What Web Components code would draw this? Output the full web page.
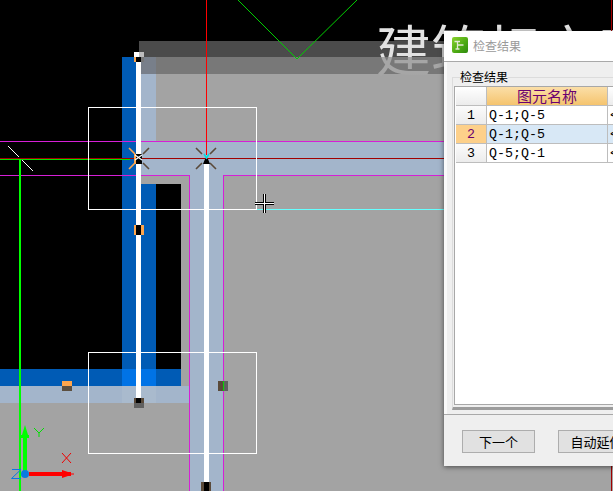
<!DOCTYPE html>
<html>
<head>
<meta charset="utf-8">
<style>
    html, body { margin: 0; height: 100%; overflow: hidden; background: #000; }
</style>
</head>
<body>
<cad-canvas></cad-canvas>
<check-dialog></check-dialog>

<script>
class CadCanvas extends HTMLElement {
    constructor() {
        super();
        this.attachShadow({ mode: "open" });
    }

    connectedCallback() {
        this.shadowRoot.innerHTML = `
            <style>
                :host { position: absolute; inset: 0; display: block; }
                svg { display: block; }
                .plan rect, .plan line.h { shape-rendering: crispEdges; }
                text { font-family: "Noto Sans CJK SC", sans-serif; font-size: 55px; letter-spacing: 0; }
            </style>
            <svg width="613" height="491" viewBox="0 0 613 491">
                <defs>
                    <linearGradient id="wm" gradientUnits="userSpaceOnUse" x1="0" y1="0" x2="0" y2="100">
                        <stop offset="0.57" stop-color="#e2e2e2"/>
                        <stop offset="0.57" stop-color="#a6a6a6"/>
                    </linearGradient>
                </defs>
                <g class="plan">
                    <rect x="139" y="41" width="474" height="16" fill="#4b4b4b"/>
                    <rect x="139" y="57" width="474" height="17" fill="#787878"/>
                    <rect x="139" y="74" width="474" height="417" fill="#a3a3a3"/>
                    <rect x="0" y="403" width="190" height="88" fill="#a3a3a3"/>

                    <rect x="122" y="57" width="17" height="127" fill="#005bb5"/>
                    <rect x="141" y="57" width="15" height="17" fill="#787f8a"/>
                    <rect x="141" y="74" width="15" height="101" fill="#a3b5cb"/>
                    <rect x="141" y="142" width="472" height="33" fill="#a3b5cb"/>
                    <rect x="190" y="175" width="33" height="316" fill="#a3b5cb"/>

                    <rect x="122" y="175" width="19" height="9" fill="#005bb5"/>
                    <rect x="122" y="184" width="34" height="185" fill="#005bb5"/>
                    <rect x="156" y="184" width="25" height="185" fill="#000"/>
                    <rect x="0" y="369" width="181" height="17" fill="#005bb5"/>
                    <rect x="122" y="369" width="34" height="17" fill="#0073e6"/>
                    <rect x="0" y="386" width="189" height="17" fill="#a3b5cb"/>
                    <rect x="122" y="386" width="34" height="17" fill="#a9bacd"/>
                </g>

                <text x="376" y="71" fill="url(#wm)">建筑标文库</text>

                <g class="plan" fill="none">
                    <rect x="611" y="0" width="1" height="491" fill="#a00000"/>
                    <rect x="0" y="141" width="613" height="1" fill="#d61fd6"/>
                    <rect x="0" y="175" width="189" height="1" fill="#d61fd6"/>
                    <rect x="223" y="175" width="390" height="1" fill="#d61fd6"/>
                    <rect x="189" y="175" width="1" height="316" fill="#d61fd6"/>
                    <rect x="223" y="175" width="1" height="316" fill="#d61fd6"/>
                    <rect x="206" y="0" width="1" height="155" fill="#ff0000"/>
                    <rect x="0" y="158" width="613" height="1" fill="#a00000"/>
                    <rect x="0" y="159" width="130" height="1" fill="#00e000"/>
                    <rect x="19" y="159" width="2" height="332" fill="#00ff00"/>
                    <rect x="136" y="62" width="5" height="336" fill="#fff"/>
                    <rect x="204" y="164" width="5" height="318" fill="#fff"/>
                    <rect x="256" y="209" width="357" height="1" fill="#66ffff"/>
                    <rect x="88" y="107" width="168" height="1" fill="#fff"/>
                    <rect x="88" y="209" width="169" height="1" fill="#fff"/>
                    <rect x="88" y="107" width="1" height="102" fill="#fff"/>
                    <rect x="256" y="107" width="1" height="102" fill="#fff"/>
                    <rect x="88" y="352" width="168" height="1" fill="#fff"/>
                    <rect x="88" y="453" width="169" height="1" fill="#fff"/>
                    <rect x="88" y="352" width="1" height="101" fill="#fff"/>
                    <rect x="256" y="352" width="1" height="102" fill="#fff"/>

                    <!-- grips -->
                    <rect x="134" y="52" width="5" height="5" fill="#fff"/>
                    <rect x="139" y="52" width="5" height="5" fill="#bdbdbd"/>
                    <rect x="134" y="57" width="2" height="5" fill="#ffa64d"/>
                    <rect x="136" y="57" width="5" height="5" fill="#000"/>
                    <rect x="141" y="57" width="3" height="5" fill="#777"/>

                    <rect x="134" y="225" width="10" height="10" fill="#ffa64d"/>
                    <rect x="136" y="225" width="5" height="10" fill="#000"/>

                    <rect x="134" y="398" width="10" height="5" fill="#5a4a3a"/>
                    <rect x="134" y="403" width="10" height="5" fill="#606060"/>
                    <rect x="136" y="398" width="5" height="5" fill="#000"/>

                    <rect x="201" y="482" width="10" height="9" fill="#5a4a3a"/>
                    <rect x="204" y="482" width="5" height="9" fill="#000"/>

                    <rect x="62" y="381" width="10" height="5" fill="#ffa64d"/>
                    <rect x="62" y="386" width="10" height="5" fill="#5c4f40"/>

                    <rect x="218" y="381" width="5" height="10" fill="#5a4a3a"/>
                    <rect x="223" y="381" width="5" height="10" fill="#606060"/>
                    <rect x="223" y="381" width="1" height="10" fill="#00e000"/>
                </g>

                <!-- top chevron and pick box -->
                <polyline points="238,0 297,59 357,0" fill="none" stroke="#00d000" stroke-width="1"/>
                <g stroke="#fff" stroke-width="1">
                    <line x1="8" y1="146" x2="19" y2="157"/>
                    <line x1="22" y1="160" x2="33" y2="171"/>
                </g>

                <!-- snap marks -->
                <g stroke-width="1.6" fill="none">
                    <path d="M129 148L135 154M129 169L135 163" stroke="#ffa64d"/>
                    <path d="M149 148L143 154M149 169L143 163" stroke="#5a4a3a"/>
                    <path d="M196 148L202 154M196 169L202 163M216 148L210 154M216 169L210 163" stroke="#5a4a3a"/>
                </g>
                <rect x="134" y="154" width="2" height="10" fill="#ffa64d"/>
                <rect x="136" y="154" width="6" height="10" fill="#000"/>
                <path d="M135 155L142 160M142 155L135 160" stroke="#fff" stroke-width="1.2"/>
                <path d="M203 164L205 159H208L210 164Z" fill="#000"/>
                <path d="M204 154L206.500 158L209 154" fill="none" stroke="#00e0e0" stroke-width="1.500"/>

                <!-- crosshair -->
                <g shape-rendering="crispEdges">
                    <rect x="255" y="202" width="19" height="3" fill="#000"/>
                    <rect x="263" y="194" width="3" height="19" fill="#000"/>
                    <rect x="255" y="203" width="19" height="1" fill="#fff"/>
                    <rect x="264" y="194" width="1" height="19" fill="#fff"/>
                </g>

                <!-- ucs icon -->
                <path d="M25 425L28 435H29V438H27V474H23V438H20V435H22Z" fill="#00ff00"/>
                <path d="M34 428L39 433L44 428M39 433V437" fill="none" stroke="#00e000" stroke-width="1"/>
                <path d="M29 472H62V470L68 472H71V473.5H74V474.5H71V476H68L62 478V476H29Z" fill="#ff0000"/>
                <path d="M62 453L71 463M71 453L62 463" fill="none" stroke="#f00000" stroke-width="1"/>
                <path d="M12 469.500H21L11.500 478.500H21" fill="none" stroke="#0a7ae0" stroke-width="1"/>
                <circle cx="25" cy="474" r="4" fill="#0a7ae0"/>
            </svg>
        `;
    }
}

class ResultTable extends HTMLElement {
    constructor() {
        super();
        this.attachShadow({ mode: "open" });
    }

    set data(rows) {
        this._rows = rows;
        this.render();
    }

    render() {
        const body = this._rows.map((r, i) => `
            <div class="num ${r.active ? "active" : ""}">${i + 1}</div>
            <div class="cell ${r.active ? "active" : ""}">${r.name}</div>
            <div class="cell ${r.active ? "active" : ""}">${r.more}</div>
        `).join("");
        this.shadowRoot.innerHTML = `
            <style>
                :host {
                    display: block;
                    box-sizing: border-box;
                    height: 319px;
                    background: #fff;
                    border: 1px solid #a8a8a8;
                    border-width: 1px 0 1px 1px;
                    padding-left: 1px;
                }
                .grid {
                    display: grid;
                    grid-template-columns: 31px 121px 60px;
                    grid-auto-rows: 19px;
                }
                .grid > div {
                    box-sizing: border-box;
                    border-right: 1px solid #bdbdbd;
                    border-bottom: 1px solid #bdbdbd;
                    white-space: nowrap;
                    overflow: hidden;
                }
                .corner { background: linear-gradient(#fff, #ececec); }
                .head {
                    background: linear-gradient(#fbdfa8, #f5c46e);
                    color: #6a0070;
                    font: 15px/18px "Noto Sans CJK SC", sans-serif;
                    text-align: center;
                }
                .num {
                    background: linear-gradient(#fbfbfb, #ececec);
                    font: 13.300px/19px "Liberation Mono", monospace;
                    text-align: center;
                    color: #000;
                }
                .num.active { background: #fdd08a; color: #6a0070; }
                .cell {
                    font: 13.300px/19px "Liberation Mono", monospace;
                    padding-left: 2px;
                    color: #000;
                }
                .cell.active { background: #d8e8f6; }
            </style>
            <div class="grid">
                <div class="corner"></div>
                <div class="head">图元名称</div>
                <div class="corner"></div>
                ${body}
            </div>
        `;
    }
}

class CheckDialog extends HTMLElement {
    constructor() {
        super();
        this.attachShadow({ mode: "open" });
    }

    connectedCallback() {
        this.shadowRoot.innerHTML = `
            <style>
                :host {
                    position: absolute;
                    left: 444px;
                    top: 31px;
                    width: 260px;
                    height: 435px;
                    display: flex;
                    flex-direction: column;
                    background: #efefef;
                    box-shadow: 0 1px 5px rgba(0, 0, 0, 0.55);
                    font-family: "Noto Sans CJK SC", sans-serif;
                }
                .title {
                    height: 30px;
                    flex: none;
                    box-sizing: border-box;
                    display: flex;
                    align-items: center;
                    gap: 5px;
                    padding: 0 0 2px 8px;
                    background: #fff;
                    color: #9a9a9a;
                    font-size: 12px;
                }
                .rule { height: 1px; flex: none; background: #a9a9a9; }
                .body {
                    height: 352px;
                    flex: none;
                    box-sizing: border-box;
                    padding: 8px 0 4px 5px;
                    border-left: 3px solid #fafafa;
                    background: #efefef;
                }
                fieldset {
                    box-sizing: border-box;
                    height: 340px;
                    margin: 0;
                    padding: 2px 0 2px 1px;
                    border: 1px solid #dcdcdc;
                    border-bottom: 3px solid #9c9c9c;
                    border-right: 0;
                }
                legend {
                    padding: 0;
                    margin-left: 6px;
                    font-size: 12px;
                    line-height: 14px;
                    color: #000;
                }
                .footer {
                    height: 52px;
                    flex: none;
                    box-sizing: border-box;
                    border-top: 1px solid #a9a9a9;
                    padding: 15px 0 0 18px;
                    display: flex;
                    align-items: flex-start;
                    gap: 23px;
                }
                button {
                    flex: none;
                    width: 73px;
                    height: 23px;
                    padding: 0;
                    background: #e1e1e1;
                    border: 1px solid #adadad;
                    border-radius: 0;
                    font: 13px/20px "Noto Sans CJK SC", sans-serif;
                    color: #000;
                }
                button.wide { width: 77px; }
            </style>
            <div class="title">
                <svg width="16" height="16" viewBox="0 0 16 16">
                    <defs>
                        <linearGradient id="ic" x1="0" y1="0" x2="1" y2="1">
                            <stop offset="0" stop-color="#8ad22e"/>
                            <stop offset="0.6" stop-color="#4aa812"/>
                            <stop offset="1" stop-color="#2f8a10"/>
                        </linearGradient>
                    </defs>
                    <rect width="16" height="16" rx="2" fill="url(#ic)"/>
                    <path d="M2.500 4.500H8M5.500 4.500V12M3.500 12H7.500M5.500 8H11.500" fill="none" stroke="#e4e8d4" stroke-width="1.300"/>
                </svg>
                <span>检查结果</span>
            </div>
            <div class="rule"></div>
            <div class="body">
                <fieldset>
                    <legend>检查结果</legend>
                    <result-table></result-table>
                </fieldset>
            </div>
            <div class="footer">
                <button>下一个</button>
                <button class="wide">自动延伸</button>
            </div>
        `;
        this.shadowRoot.querySelector("result-table").data = [
            { name: "Q-1;Q-5", more: "&lt;" },
            { name: "Q-1;Q-5", more: "&lt;", active: true },
            { name: "Q-5;Q-1", more: "&lt;" }
        ];
    }
}

customElements.define("cad-canvas", CadCanvas);
customElements.define("result-table", ResultTable);
customElements.define("check-dialog", CheckDialog);
</script>
</body>
</html>
